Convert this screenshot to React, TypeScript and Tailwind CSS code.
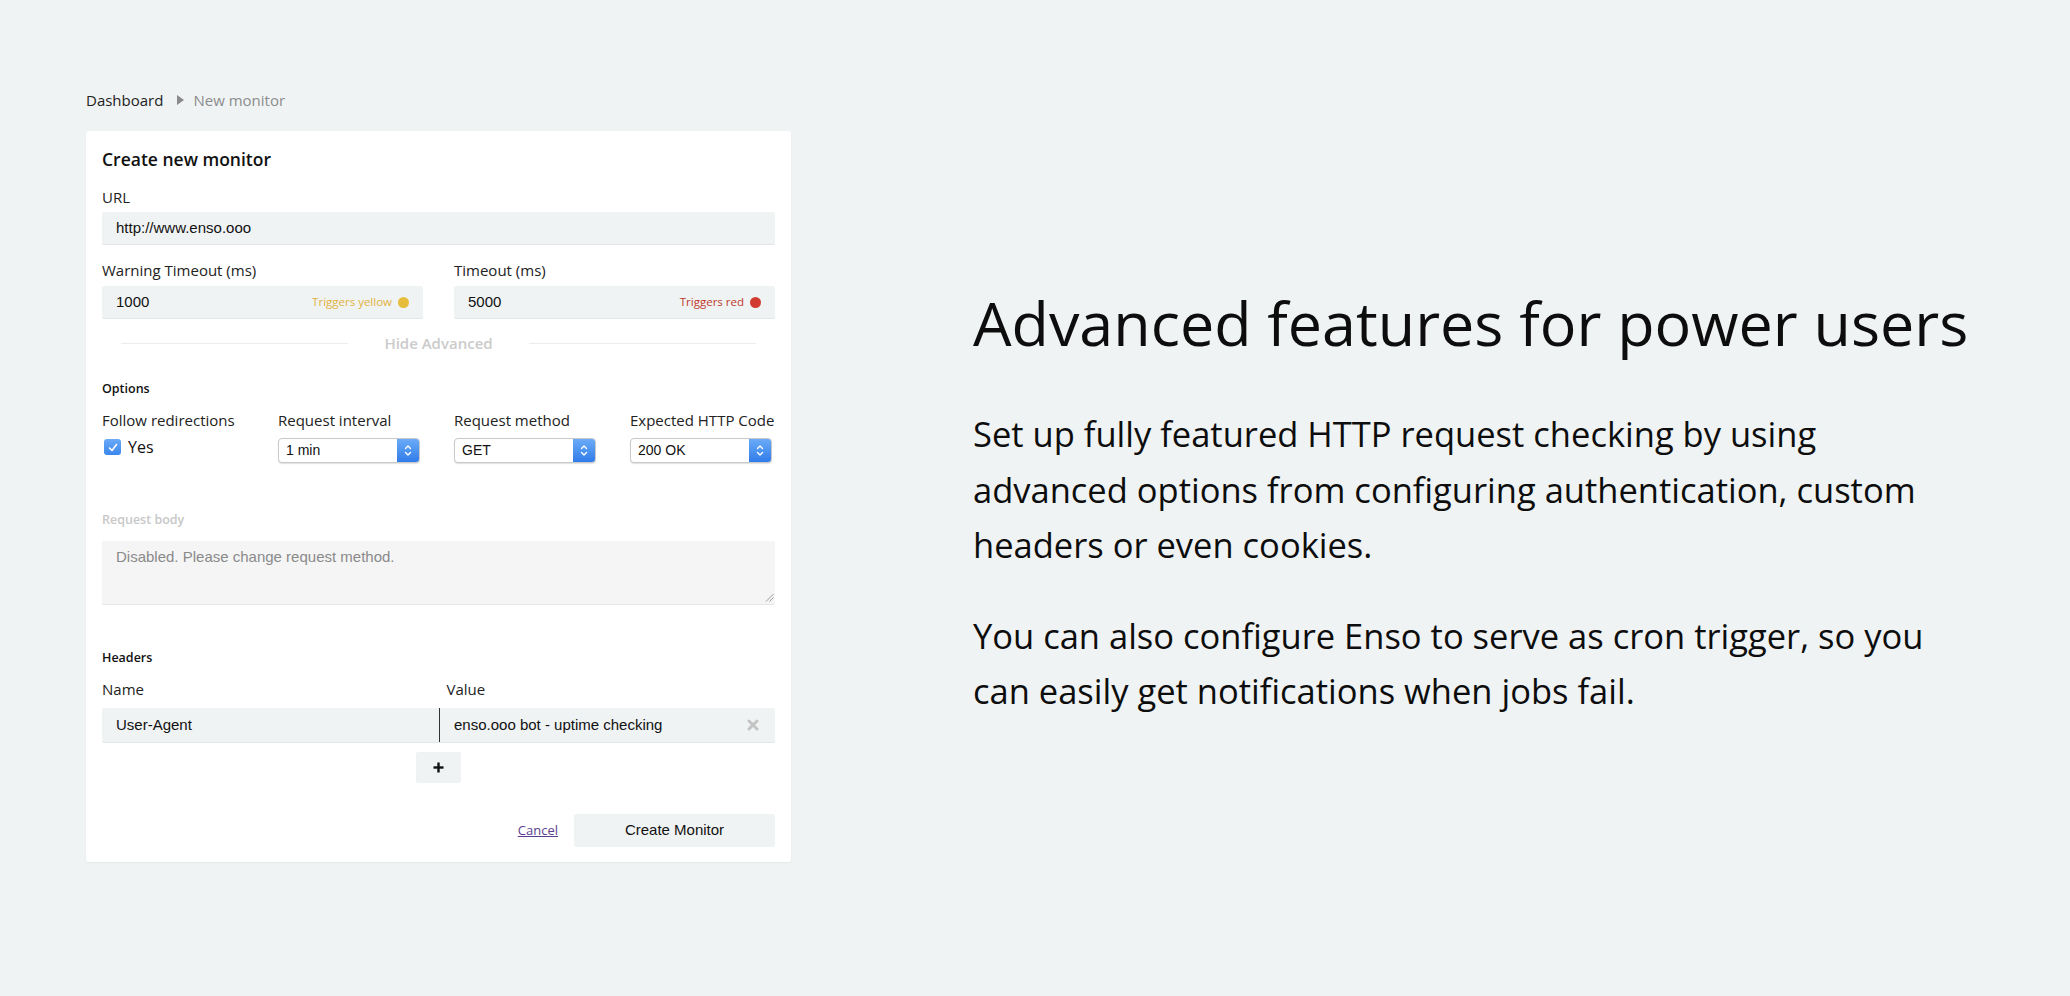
import React from 'react';

const Field = ({ children, className = '' }: { children: React.ReactNode; className?: string }) => (
  <div
    className={`flex items-center bg-[#f0f3f4] border-b border-[#e2e6e8] rounded-[2px] px-[14px] font-['Liberation_Sans'] text-[15px] text-[#111] ${className}`}
  >
    {children}
  </div>
);

const Select = ({ value }: { value: string }) => (
  <div className="flex h-[25px] w-[142px] items-stretch rounded-[4px] border border-[#c9c9c9] bg-white shadow-[0_1px_1px_rgba(0,0,0,0.12)]">
    <div className="flex flex-1 items-center pl-[7px] font-['Liberation_Sans'] text-[14px] text-[#111]">{value}</div>
    <div className="flex w-[22px] items-center justify-center rounded-r-[3px] bg-gradient-to-b from-[#6aaaf7] to-[#2f7ce9]">
      <svg width="8" height="13" viewBox="0 0 8 13" fill="none" stroke="white" strokeWidth="1.4" strokeLinecap="round" strokeLinejoin="round">
        <path d="M1.5 4.5 L4 2 L6.5 4.5" />
        <path d="M1.5 8.5 L4 11 L6.5 8.5" />
      </svg>
    </div>
  </div>
);

const Label = ({ children, className = '' }: { children: React.ReactNode; className?: string }) => (
  <div className={`text-[15px] leading-[20px] text-[#222] ${className}`}>{children}</div>
);

export default function App() {
  return (
    <div className="min-h-screen w-full bg-[#eff3f4] font-['Open_Sans',sans-serif] text-[#111]">
      <div className="flex items-start pl-[86px]">
        {/* left: form */}
        <div className="w-[705px] pt-[90px]">
          <div className="mb-[21px] flex h-[20px] items-center text-[15px]">
            <span className="text-[#222]">Dashboard</span>
            <svg className="ml-[14px] mr-[9px]" width="7" height="10" viewBox="0 0 7 10">
              <path d="M0 0 L7 5 L0 10 Z" fill="#8a8a8a" />
            </svg>
            <span className="text-[#8c8c8c]">New monitor</span>
          </div>

          <div className="rounded-[3px] bg-white px-[16px] pt-[16px] pb-[15px] shadow-[0_1px_2px_rgba(0,0,0,0.05)]">
            <div className="text-[17.5px] font-semibold leading-[24px] text-[#111]">Create new monitor</div>

            <Label className="mt-[16px] mb-[5px]">URL</Label>
            <Field className="h-[33px]">http://www.enso.ooo</Field>

            <div className="mt-[15px] grid grid-cols-2 gap-x-[31px]">
              <div>
                <Label className="mb-[6px]">Warning Timeout (ms)</Label>
                <Field className="h-[33px] justify-between">
                  <span>1000</span>
                  <span className="flex items-center gap-[6px] font-['Open_Sans'] text-[11.5px] text-[#e0b23c]">
                    Triggers yellow
                    <span className="h-[11px] w-[11px] rounded-full bg-[#e6bd3a]" />
                  </span>
                </Field>
              </div>
              <div>
                <Label className="mb-[6px]">Timeout (ms)</Label>
                <Field className="h-[33px] justify-between">
                  <span>5000</span>
                  <span className="flex items-center gap-[6px] font-['Open_Sans'] text-[11.5px] text-[#c0392b]">
                    Triggers red
                    <span className="h-[11px] w-[11px] rounded-full bg-[#d13b30]" />
                  </span>
                </Field>
              </div>
            </div>

            <div className="mt-[14px] flex h-[20px] items-center px-[19px]">
              <div className="h-px flex-1 bg-[#ececec]" />
              <div className="px-[36px] text-[15px] font-semibold text-[#cbcbcb]">Hide Advanced</div>
              <div className="h-px flex-1 bg-[#ececec]" />
            </div>

            <div className="mt-[27px] text-[12.5px] font-semibold leading-[18px] text-[#111]">Options</div>

            <div className="mt-[12px] grid grid-cols-4 gap-x-[31px]">
              <div>
                <Label className="mb-[8px] whitespace-nowrap">Follow redirections</Label>
                <div className="flex items-center pl-[2px] pt-[1px]">
                  <span className="flex h-[16px] w-[17px] items-center justify-center rounded-[3px] bg-gradient-to-b from-[#6aaaf7] to-[#3b86ee]">
                    <svg width="10" height="9" viewBox="0 0 10 9" fill="none" stroke="white" strokeWidth="1.6" strokeLinecap="round" strokeLinejoin="round">
                      <path d="M1.5 5 L4 7.5 L8.5 1.5" />
                    </svg>
                  </span>
                  <span className="ml-[7px] text-[16px] leading-[16px] text-[#111]">Yes</span>
                </div>
              </div>
              <div>
                <Label className="mb-[8px] whitespace-nowrap">Request interval</Label>
                <Select value="1 min" />
              </div>
              <div>
                <Label className="mb-[8px] whitespace-nowrap">Request method</Label>
                <Select value="GET" />
              </div>
              <div>
                <Label className="mb-[8px] whitespace-nowrap">Expected HTTP Code</Label>
                <Select value="200 OK" />
              </div>
            </div>

            <div className="mt-[48px] text-[12.5px] font-semibold leading-[18px] text-[#c8c8c8]">Request body</div>
            <div className="relative mt-[12px] h-[64px] rounded-[2px] border-b border-[#e6e6e6] bg-[#f5f5f5] px-[14px] pt-[5px] font-['Liberation_Sans'] text-[15px] text-[#8a8a8a]">
              Disabled. Please change request method.
              <svg className="absolute right-[1px] bottom-[2px]" width="9" height="9" viewBox="0 0 9 9" stroke="#9a9a9a" strokeWidth="1">
                <path d="M1 8.5 L8.5 1" />
                <path d="M4.5 8.5 L8.5 4.5" />
              </svg>
            </div>

            <div className="mt-[44px] text-[12.5px] font-semibold leading-[18px] text-[#111]">Headers</div>

            <div className="mt-[12px] grid grid-cols-2 gap-x-[14px]">
              <Label>Name</Label>
              <Label className="pl-[1px]">Value</Label>
            </div>

            <div className="mt-[9px] flex h-[35px] items-stretch rounded-[2px] border-b border-[#e2e6e8] bg-[#f0f3f4] font-['Liberation_Sans'] text-[15px] text-[#111]">
              <div className="flex w-[338px] items-center border-r border-[#333] pl-[14px]">User-Agent</div>
              <div className="flex flex-1 items-center justify-between pl-[14px] pr-[16px]">
                <span>enso.ooo bot - uptime checking</span>
                <svg width="12" height="12" viewBox="0 0 12 12" stroke="#c4c4c4" strokeWidth="3" strokeLinecap="round">
                  <path d="M2 2 L10 10" />
                  <path d="M10 2 L2 10" />
                </svg>
              </div>
            </div>

            <div className="mt-[9px] flex justify-center">
              <div className="flex h-[31px] w-[45px] items-center justify-center rounded-[2px] bg-[#f0f3f4]">
                <svg width="11" height="11" viewBox="0 0 11 11" stroke="#111" strokeWidth="2.4">
                  <path d="M5.5 0.5 V10.5" />
                  <path d="M0.5 5.5 H10.5" />
                </svg>
              </div>
            </div>

            <div className="mt-[31px] flex items-center justify-end">
              <a className="mr-[16px] text-[13px] text-[#5a3d8e] underline">Cancel</a>
              <button className="h-[33px] w-[201px] rounded-[2px] bg-[#f0f3f4] font-['Liberation_Sans'] text-[15px] text-[#111]">
                Create Monitor
              </button>
            </div>
          </div>
        </div>

        {/* right: copy */}
        <div className="ml-[182px] pt-[287px]">
          <h1 className="whitespace-nowrap text-[61px] font-normal leading-[72px] text-[#0d0d0d]">
            Advanced features for power users
          </h1>
          <p className="mt-[47px] max-w-[985px] text-[34.5px] leading-[55.5px] text-[#0d0d0d]">
            Set up fully featured HTTP request checking by using advanced options from configuring authentication, custom
            headers or even cookies.
          </p>
          <p className="mt-[35px] max-w-[985px] text-[34.5px] leading-[55.5px] text-[#0d0d0d]">
            You can also configure Enso to serve as cron trigger, so you can easily get notifications when jobs fail.
          </p>
        </div>
      </div>
    </div>
  );
}
